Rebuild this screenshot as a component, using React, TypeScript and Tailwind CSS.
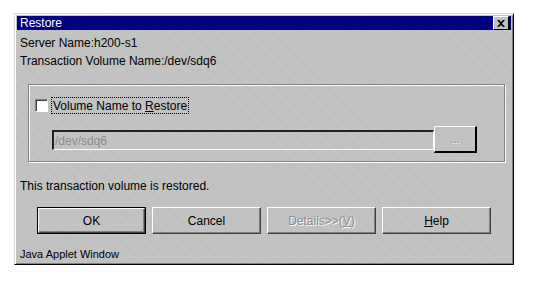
import React from 'react';

const face = "font-['Liberation_Sans',Arial,sans-serif]";
const dither =
  'bg-[#c2c2c2] bg-[repeating-linear-gradient(45deg,#c5c5c5_0px,#c5c5c5_1px,#bfbfbf_1px,#bfbfbf_2px)]';

const Button: React.FC<{ children: React.ReactNode; isDefault?: boolean; disabled?: boolean }> = ({
  children,
  isDefault,
  disabled,
}) => (
  <div
    className={`w-[109px] h-[27px] flex items-center justify-center text-[12px] ${
      isDefault ? 'border border-black' : ''
    } ${disabled ? 'text-[#8c8c8c] [text-shadow:1px_1px_0_#fff]' : 'text-black'}`}
  >
    <div className="w-full h-full flex items-center justify-center border-t border-l border-white border-r border-b border-r-[#404040] border-b-[#404040] shadow-[inset_-1px_-1px_0_#808080]">
      {children}
    </div>
  </div>
);

export default function App() {
  return (
    <div className={`w-[538px] h-[285px] bg-white pt-[13px] pl-[14px] ${face}`}>
      <div
        className={`w-[500px] h-[252px] ${dither} border-t border-l border-[#d8d8d8] border-r border-b border-r-black border-b-black shadow-[inset_1px_1px_0_#fff,inset_-1px_-1px_0_#808080] p-[2px] flex flex-col`}
      >
        {/* title bar */}
        <div className="h-[19px] bg-[#000080] flex items-center justify-between pl-[3px] pr-[2px]">
          <span className="text-white text-[12px] leading-none">Restore</span>
          <div className="w-[16px] h-[14px] bg-[#c0c0c0] border-t border-l border-white border-r border-b border-r-black border-b-black flex items-center justify-center">
            <svg width="8" height="7" viewBox="0 0 8 7">
              <path d="M0 0h2l2 2 2-2h2L5 3.5 8 7H6L4 5 2 7H0l3-3.5z" fill="#000" />
            </svg>
          </div>
        </div>

        {/* body */}
        <div className="flex flex-col pl-[3px] pt-[4px] text-[12px] text-black">
          <div className="h-[18px] leading-[18px]">Server Name:h200-s1</div>
          <div className="h-[18px] leading-[18px]">Transaction Volume Name:/dev/sdq6</div>

          <div className="ml-[8px] mt-[14px] w-[477px] h-[78px] border border-[#808080] shadow-[inset_1px_1px_0_#fff,1px_1px_0_#fff] flex flex-col">
            <div className="flex items-center mt-[12px] ml-[6px]">
              <div className="w-[13px] h-[13px] bg-white border-t border-l border-[#808080] border-r border-b border-r-white border-b-white shadow-[inset_1px_1px_0_#404040]" />
              <span className="ml-[3px] px-[1px] h-[17px] leading-[16px] border border-dotted border-black">
                Volume Name to <span className="underline">R</span>estore
              </span>
            </div>
            <div className="flex items-end ml-[23px] mt-[12px]">
              <div className="w-[382px] h-[20px] border-t-2 border-l-2 border-[#202020] border-r border-b border-r-white border-b-white flex items-center pl-[1px] text-[#8c8c8c] mb-[3px]">
                /dev/sdq6
              </div>
              <div className="w-[43px] h-[27px] border-t border-l border-white border-r-2 border-b-2 border-r-black border-b-black flex items-center justify-center text-[#8c8c8c] [text-shadow:1px_1px_0_#fff] text-[11px] leading-none">
                ...
              </div>
            </div>
          </div>

          <div className="h-[18px] leading-[18px] mt-[15px]">This transaction volume is restored.</div>

          <div className="flex gap-[6px] ml-[17px] mt-[12px]">
            <Button isDefault>OK</Button>
            <Button>Cancel</Button>
            <Button disabled>
              Details&gt;&gt;(<span className="underline">V</span>)
            </Button>
            <Button>
              <span className="underline">H</span>elp
            </Button>
          </div>

          <div className="h-[16px] leading-[16px] mt-[12px] text-[11px]">Java Applet Window</div>
        </div>
      </div>
    </div>
  );
}
